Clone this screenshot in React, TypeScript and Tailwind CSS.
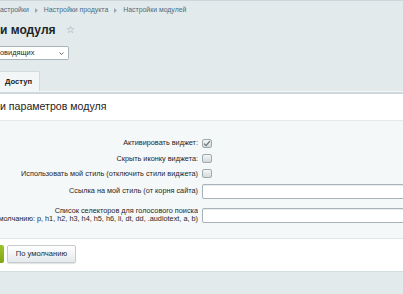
import React from 'react'

const font = "font-['Liberation_Sans',Arial,sans-serif]"

function Arrow() {
  return (
    <svg width="3" height="5" viewBox="0 0 3 5" className="shrink-0">
      <path d="M0 0 L3 2.5 L0 5 Z" fill="#9aa8b1" />
    </svg>
  )
}

function Checkbox({ checked = false }: { checked?: boolean }) {
  return (
    <div className="w-[10px] h-[9px] rounded-[2px] border border-[#9ea8ad] bg-gradient-to-b from-[#f4f6f7] to-[#d3d9dc] flex items-center justify-center">
      {checked && (
        <svg width="8" height="7" viewBox="0 0 8 7">
          <path d="M1 3.6 L3 5.6 L7 1" fill="none" stroke="#6c767b" strokeWidth="1.2" />
        </svg>
      )}
    </div>
  )
}

function Row({ label, children, className }: { label: React.ReactNode; children: React.ReactNode; className: string }) {
  return (
    <div className={`flex items-center ${className}`}>
      <div className="w-[198px] shrink-0 overflow-hidden flex flex-col items-end text-right text-[7.3px] leading-[8px] text-[#1f1f1f] whitespace-nowrap">
        {label}
      </div>
      <div className="ml-[4px] flex-1 flex items-center">{children}</div>
    </div>
  )
}

function TextInput() {
  return <div className="h-[15px] w-[230px] shrink-0 rounded-[2px] border border-[#a7b3b9] bg-white shadow-[inset_0_1px_1px_rgba(0,0,0,0.08)]" />
}

export default function App() {
  return (
    <div className={`w-[403px] h-[294px] overflow-hidden bg-[#e2eaec] border-t border-[#cdd6da] ${font}`}>
      {/* breadcrumbs */}
      <div className="h-[18px] flex items-center gap-[6px] text-[6.9px] text-[#4d6b82] whitespace-nowrap">
        <span>астройки</span>
        <Arrow />
        <span>Настройки продукта</span>
        <Arrow />
        <span>Настройки модулей</span>
      </div>

      {/* title */}
      <div className="h-[22px] flex items-center">
        <span className="text-[12px] font-bold text-[#1d2529] leading-none">и модуля</span>
        <span className="ml-[10px] text-[10px] text-[#8a969c] leading-none">☆</span>
      </div>

      {/* select */}
      <div className="mt-[5px] h-[14px] w-[69px] rounded-r-[2px] border border-l-0 border-[#a9b4ba] bg-white flex items-center justify-between pr-[4px]">
        <span className="text-[7.4px] text-[#1f1f1f]">овидящих</span>
        <svg width="5" height="3" viewBox="0 0 5 3">
          <path d="M0.5 0.5 L2.5 2.5 L4.5 0.5" fill="none" stroke="#555" strokeWidth="0.9" />
        </svg>
      </div>

      {/* tabs */}
      <div className="mt-[11px] h-[20px] flex">
        <div className="w-[40px] h-full bg-[#f3f6f7] border-t border-r border-[#d2dadd] rounded-tr-[2px] flex items-center pl-[5px]">
          <span className="text-[7.6px] font-bold text-[#222]">Доступ</span>
        </div>
      </div>

      {/* content */}
      <div className="border-t border-[#f4f7f8]">
        <div className="border-t-2 border-[#cfd8dc] bg-white">
          <div className="h-[27px] flex items-center border-b border-[#e3e9eb]">
            <span className="text-[10.6px] text-[#1d1d1d]">и параметров модуля</span>
          </div>

          <div className="bg-[#f5f8f9] pt-[14px] pb-[11px] border-b border-[#dfe6e9]">
            <Row label="Активировать виджет:" className="h-[16px]">
              <Checkbox checked />
            </Row>
            <Row label="Скрыть иконку виджета:" className="h-[15px]">
              <Checkbox />
            </Row>
            <Row label="Использовать мой стиль (отключить стили виджета)" className="h-[15px]">
              <Checkbox />
            </Row>
            <Row label="Ссылка на мой стиль (от корня сайта)" className="h-[20px]">
              <TextInput />
            </Row>
            <Row
              label={
                <>
                  <span>Список селекторов для голосового поиска</span>
                  <span>(по умолчанию: p, h1, h2, h3, h4, h5, h6, li, dt, dd, .audiotext, a, b)</span>
                </>
              }
              className="h-[24px] mt-[2px]"
            >
              <TextInput />
            </Row>
          </div>

          <div className="h-[33px] flex items-start pt-[6px] gap-[3px] border-b border-[#d5dde0]">
            <div className="w-[4px] h-[18px] rounded-r-[2px] bg-gradient-to-b from-[#9cc52a] to-[#7ea514]" />
            <div className="w-[69px] h-[18px] rounded-[2px] border border-[#c4ccd0] bg-gradient-to-b from-[#ffffff] to-[#e4e9eb] shadow-[0_1px_1px_rgba(0,0,0,0.12)] flex items-center justify-center">
              <span className="text-[7.6px] text-[#2a2a2a]">По умолчанию</span>
            </div>
          </div>
        </div>
      </div>
    </div>
  )
}
